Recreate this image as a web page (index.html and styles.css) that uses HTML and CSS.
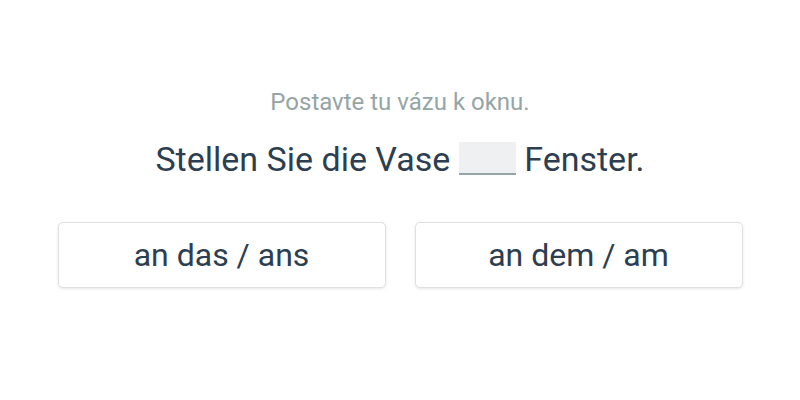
FILE: index.html
```html
<!DOCTYPE html>
<html>
<head>
<meta charset="utf-8">
<link rel="stylesheet" href="styles.css">
</head>
<body>
<div class="wrap">
  <div class="hint">Postavte tu vázu k oknu.</div>
  <div class="sentence">Stellen Sie die Vase <span class="blank"></span> Fenster.</div>
  <div class="options">
    <button class="opt">an das / ans</button>
    <button class="opt">an dem / am</button>
  </div>
</div>
</body>
</html>
```

FILE: styles.css
```css
html, body {
  margin: 0;
  padding: 0;
  background: #ffffff;
  font-family: Roboto, "Noto Sans", sans-serif;
}
.wrap {
  width: 800px;
  height: 400px;
  display: flex;
  flex-direction: column;
  align-items: center;
  padding-top: 86px;
  box-sizing: border-box;
}
.hint {
  font-size: 24px;
  line-height: 32px;
  color: #95a5a6;
}
.sentence {
  margin-top: 20px;
  font-size: 34px;
  line-height: 42px;
  color: #2c3e50;
}
.blank {
  display: inline-block;
  width: 57px;
  height: 31px;
  background: #eef0f2;
  border-bottom: 2px solid #95a5a6;
  vertical-align: -4px;
}
.options {
  margin-top: 42px;
  display: flex;
  gap: 29px;
}
.opt {
  width: 328px;
  height: 66px;
  background: #ffffff;
  border: 1px solid #dde1e4;
  border-radius: 5px;
  box-shadow: 0 1px 3px rgba(0,0,0,0.1);
  font-family: Roboto, "Noto Sans", sans-serif;
  font-size: 32px;
  color: #2c3e50;
  padding: 0;
}
```
